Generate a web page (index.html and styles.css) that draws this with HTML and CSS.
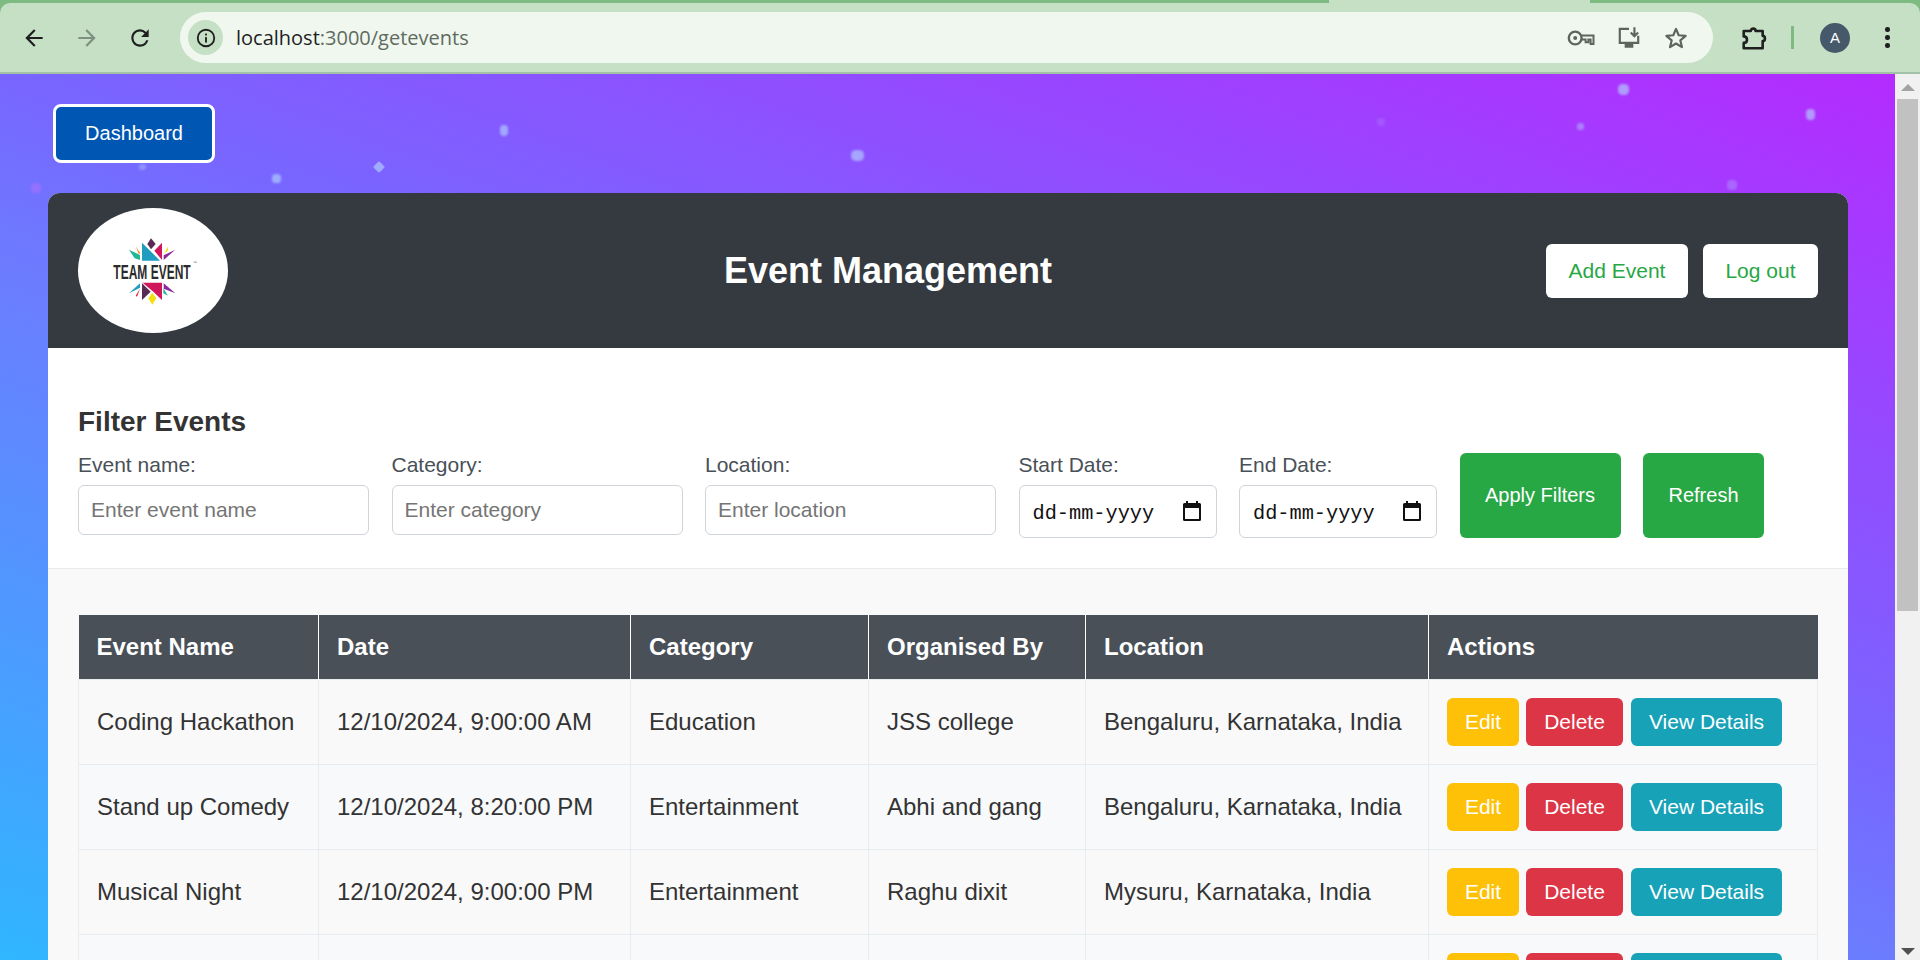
FILE: index.html
```html
<!DOCTYPE html>
<html lang="en">
<head>
<meta charset="utf-8">
<title>Event Management</title>
<link rel="stylesheet" href="styles.css">
</head>
<body>
<div class="browser">
  <div class="tabstrip"><div class="active-tab"></div></div>
  <div class="toolbar">
    <button class="tb-btn"><svg viewBox="0 0 24 24" width="26" height="26"><path fill="#1f1f1f" d="M20 11H7.83l5.59-5.59L12 4l-8 8 8 8 1.41-1.41L7.83 13H20v-2z"/></svg></button>
    <button class="tb-btn"><svg viewBox="0 0 24 24" width="26" height="26"><path fill="#7f8f80" d="M4 11h12.17l-5.59-5.59L12 4l8 8-8 8-1.41-1.41L16.17 13H4v-2z"/></svg></button>
    <button class="tb-btn"><svg viewBox="0 0 24 24" width="26" height="26"><path fill="#1f1f1f" d="M17.65 6.35A7.958 7.958 0 0 0 12 4c-4.42 0-7.99 3.58-7.99 8s3.57 8 7.99 8c3.73 0 6.84-2.55 7.73-6h-2.08A5.99 5.99 0 0 1 12 18c-3.31 0-6-2.69-6-6s2.69-6 6-6c1.66 0 3.14.69 4.22 1.78L13 11h7V4l-2.35 2.35z"/></svg></button>
    <div class="omnibox">
      <span class="chip"><svg viewBox="0 0 24 24" width="22" height="22"><circle cx="12" cy="12" r="9" fill="none" stroke="#1f1f1f" stroke-width="2"/><rect x="11" y="11" width="2" height="6" fill="#1f1f1f"/><rect x="11" y="7.2" width="2" height="2" fill="#1f1f1f"/></svg></span>
      <span class="url"><span class="host">localhost</span>:3000/getevents</span>
      <span class="omni-icons">
        <svg viewBox="0 0 28 18" width="28" height="18"><circle cx="8.2" cy="9" r="6.4" fill="none" stroke="#5e655f" stroke-width="2.4"/><circle cx="8.2" cy="9" r="2" fill="#5e655f"/><path d="M14.5 6.6H26.5V15H23.6V10.4H21.4V13.2H18.6V10.4H14.5" fill="none" stroke="#5e655f" stroke-width="2"/></svg>
        <svg viewBox="0 0 24 24" width="26" height="26"><path d="M12 3.5H3.5v13h17V10" fill="none" stroke="#5e655f" stroke-width="2"/><rect x="8" y="17" width="8" height="4" fill="#5e655f"/><path d="M17 2v8M13.6 7l3.4 3.4L20.4 7" fill="none" stroke="#5e655f" stroke-width="2"/></svg>
        <svg viewBox="0 0 24 24" width="26" height="26"><path d="M12 3.6l2.5 5.9 6.4.5-4.9 4.2 1.5 6.2-5.5-3.3-5.5 3.3 1.5-6.2L3.1 10l6.4-.5z" fill="none" stroke="#5e655f" stroke-width="2" stroke-linejoin="round"/></svg>
      </span>
    </div>
    <span class="ext"><svg viewBox="0 0 24 24" width="26" height="26"><path fill="none" stroke="#1f1f1f" stroke-width="2.4" stroke-linejoin="round" d="M2.5 5.5H9C9 2.6 13.5 2.6 13.5 5.5H20V10C22.8 10 22.8 14.8 20 14.8V21.5H2.5V16.5C6.5 16.5 6.5 10.5 2.5 10.5Z"/></svg></span>
    <span class="sep"></span>
    <span class="avatar">A</span>
    <span class="kebab"><i></i><i></i><i></i></span>
  </div>
</div>

<div class="window">
  <main class="viewport">
    <span class="spark s1"></span><span class="spark s2"></span><span class="spark s3"></span><span class="spark s4"></span>
    <span class="spark s5"></span><span class="spark s6"></span><span class="spark s7"></span><span class="spark s8"></span>
    <span class="spark s9"></span><span class="spark s10"></span><span class="spark s11"></span>

    <button class="dash-btn">Dashboard</button>

    <section class="card">
      <header class="card-head">
        <div class="logo">
          <svg viewBox="114 54 450 375" width="150" height="125">
            <polygon fill="#5a2a55" points="333,145 347,162 333,178 322,162"/>
            <polygon fill="#1f9cc0" points="306,158 360,212 306,212"/>
            <polygon fill="#d1175c" points="366,158 366,210 343,182"/>
            <polygon fill="#1fb894" points="267,179 300,195 300,210 284,205"/>
            <polygon fill="#f08a24" points="288,170 301,190 296,192"/>
            <polygon fill="#f2e011" points="383,170 385,180 372,193"/>
            <polygon fill="#8a2aa0" points="406,179 371,196 371,210"/>
            <text class="logo-text" transform="translate(220 268) scale(1 1.25)" textLength="232" lengthAdjust="spacingAndGlyphs">TEAM EVENT</text>
            <text class="logo-tm" x="458" y="222">™</text>
            <polygon fill="#1f9cc0" points="300,280 300,293 267,310"/>
            <polygon fill="#e0203a" points="300,296 291,320 287,317"/>
            <polygon fill="#5a2a55" points="306,280 332,305 306,330"/>
            <polygon fill="#d1175c" points="308,278 366,278 366,330 340,305"/>
            <polygon fill="#f2e011" points="337,308 349,325 337,344 325,325"/>
            <polygon fill="#1fb894" points="370,295 384,317 370,310"/>
            <polygon fill="#8a2aa0" points="371,280 406,310 371,296"/>
          </svg>
        </div>
        <h1 class="title">Event Management</h1>
        <div class="head-actions">
          <button class="head-btn">Add Event</button>
          <button class="head-btn">Log out</button>
        </div>
      </header>

      <section class="filters">
        <h3 class="filters-title">Filter Events</h3>
        <div class="filter-row">
          <div class="field"><label>Event name:</label><input class="text-input" type="text" placeholder="Enter event name"></div>
          <div class="field"><label>Category:</label><input class="text-input" type="text" placeholder="Enter category"></div>
          <div class="field"><label>Location:</label><input class="text-input" type="text" placeholder="Enter location"></div>
          <div class="field"><label>Start Date:</label><div class="date-input"><span>dd-mm-yyyy</span><svg viewBox="0 0 18 20" width="18" height="20"><path d="M3 0h2v2h8V0h2v2h1.5A1.5 1.5 0 0 1 18 3.5v15a1.5 1.5 0 0 1-1.5 1.5h-15A1.5 1.5 0 0 1 0 18.500v-15A1.5 1.5 0 0 1 1.500 2H3zM2 7v11h14V7z" fill="#111"/></svg></div></div>
          <div class="field"><label>End Date:</label><div class="date-input"><span>dd-mm-yyyy</span><svg viewBox="0 0 18 20" width="18" height="20"><path d="M3 0h2v2h8V0h2v2h1.5A1.5 1.5 0 0 1 18 3.5v15a1.5 1.5 0 0 1-1.5 1.5h-15A1.5 1.5 0 0 1 0 18.500v-15A1.5 1.5 0 0 1 1.500 2H3zM2 7v11h14V7z" fill="#111"/></svg></div></div>
          <button class="green-btn apply">Apply Filters</button>
          <button class="green-btn refresh">Refresh</button>
        </div>
      </section>

      <section class="table-wrap">
        <table class="events">
          <colgroup><col class="c1"><col class="c2"><col class="c3"><col class="c4"><col class="c5"><col class="c6"></colgroup>
          <thead><tr><th>Event Name</th><th>Date</th><th>Category</th><th>Organised By</th><th>Location</th><th>Actions</th></tr></thead>
          <tbody>
            <tr><td>Coding Hackathon</td><td>12/10/2024, 9:00:00 AM</td><td>Education</td><td>JSS college</td><td>Bengaluru, Karnataka, India</td><td class="actions"><button class="act edit">Edit</button><button class="act del">Delete</button><button class="act view">View Details</button></td></tr>
            <tr><td>Stand up Comedy</td><td>12/10/2024, 8:20:00 PM</td><td>Entertainment</td><td>Abhi and gang</td><td>Bengaluru, Karnataka, India</td><td class="actions"><button class="act edit">Edit</button><button class="act del">Delete</button><button class="act view">View Details</button></td></tr>
            <tr><td>Musical Night</td><td>12/10/2024, 9:00:00 PM</td><td>Entertainment</td><td>Raghu dixit</td><td>Mysuru, Karnataka, India</td><td class="actions"><button class="act edit">Edit</button><button class="act del">Delete</button><button class="act view">View Details</button></td></tr>
            <tr><td></td><td></td><td></td><td></td><td></td><td class="actions"><button class="act edit">Edit</button><button class="act del">Delete</button><button class="act view">View Details</button></td></tr>
          </tbody>
        </table>
      </section>
    </section>
  </main>
  <aside class="scrollbar">
    <span class="arrow up"></span>
    <span class="thumb"></span>
    <span class="track"></span>
    <span class="arrow down"></span>
  </aside>
</div>
</body>
</html>
```

FILE: styles.css
```css
* { box-sizing: border-box; }
html, body { margin: 0; height: 960px; overflow: hidden; }
body { font-family: "Liberation Sans", Arial, sans-serif; display: flex; flex-direction: column; }
button { font-family: inherit; cursor: pointer; }

/* Browser chrome */
.browser { height: 74px; flex: none; background: #7dbb82; position: relative; border-bottom: 2px solid #a3c1a6; }
.tabstrip { height: 3px; position: relative; }
.active-tab { position: absolute; left: 1329px; width: 261px; top: 0; height: 3px; background: #c5e0c5; }
.toolbar { height: 69px; background: #c5e0c5; border-radius: 10px 10px 0 0; display: flex; align-items: center; padding-left: 14px; }
.tb-btn { width: 54px; height: 40px; padding: 0; border: 0; background: none; display: flex; align-items: center; justify-content: center; margin-left: -1px; }
.tb-btn:first-child { width: 40px; margin-right: 7px; margin-left: 0; }
.tb-btn:nth-child(3) { margin-right: 13px; }
.omnibox { width: 1533px; height: 51px; border-radius: 26px; background: #eff7ef; display: flex; align-items: center; padding-left: 8px; }
.chip { width: 35px; height: 35px; border-radius: 50%; background: #c5e0c5; display: flex; align-items: center; justify-content: center; flex: none; }
.url { font-family: "Open Sans", sans-serif; font-size: 20px; color: #5f6b60; margin-left: 13px; }
.host { color: #1f1f1f; }
.omni-icons { margin-left: auto; display: flex; align-items: center; gap: 21px; padding-right: 24px; }
.ext { margin-left: 28px; display: flex; }
.sep { width: 3px; height: 23px; background: #7dbb82; margin-left: 24px; }
.avatar { width: 30px; height: 30px; border-radius: 50%; background: #45596a; color: #fff; font-size: 15px; display: flex; align-items: center; justify-content: center; margin-left: 26px; }
.kebab { display: flex; flex-direction: column; gap: 3.500px; margin-left: 35px; }
.kebab i { width: 4.500px; height: 4.500px; border-radius: 50%; background: #1f1f1f; display: block; }

/* Window */
.window { flex: 1; display: flex; min-height: 0; }
.viewport { flex: 1; position: relative; overflow: hidden; padding: 30px 0 0 48px; background: linear-gradient(20deg, #30b6ff 0%, #6c7cff 44%, #7866ff 56%, #b42bff 100%); }

.spark { position: absolute; border-radius: 40%; filter: blur(1px); background: rgba(180, 210, 255, .65); }
.s1 { left: 500px; top: 51px; width: 8px; height: 11px; }
.s2 { left: 373px; top: 87px; width: 12px; height: 12px; border-radius: 0; clip-path: polygon(50% 0, 100% 50%, 50% 100%, 0 50%); }
.s3 { left: 272px; top: 100px; width: 9px; height: 9px; }
.s4 { left: 139px; top: 90px; width: 7px; height: 6px; opacity: .6; }
.s5 { left: 31px; top: 109px; width: 10px; height: 10px; opacity: .35; background: #d070ff; }
.s6 { left: 1618px; top: 10px; width: 11px; height: 11px; }
.s7 { left: 1806px; top: 35px; width: 9px; height: 11px; }
.s8 { left: 1577px; top: 49px; width: 7px; height: 7px; opacity: .7; }
.s9 { left: 1377px; top: 44px; width: 8px; height: 8px; opacity: .25; }
.s10 { left: 1727px; top: 106px; width: 10px; height: 10px; opacity: .45; }
.s11 { left: 851px; top: 76px; width: 13px; height: 11px; }

.dash-btn { display: block; margin-left: 5px; width: 162px; height: 59px; background: #0056b3; color: #fff; border: 3px solid #fff; border-radius: 8px; font-size: 20px; padding: 0; }

.card { position: relative; width: 1800px; margin-top: 30px; background: #f9f9f9; border-radius: 12px 12px 0 0; }
.card-head { height: 155px; background: #343a40; border-radius: 12px 12px 0 0; display: flex; align-items: center; justify-content: space-between; padding: 0 30px; }
.logo { width: 150px; height: 125px; border-radius: 50%; background: #fff; display: flex; }
.logo-text { font-family: "Liberation Sans Narrow", "Liberation Sans", sans-serif; font-weight: 700; font-size: 48px; fill: #2b2b2b; }
.logo-tm { font-family: "Liberation Sans", sans-serif; font-size: 12px; fill: #555; }
.title { margin: 0 0 0 2px; color: #fff; font-size: 36px; font-weight: 700; }
.head-actions { display: flex; gap: 15px; }
.head-btn { height: 54px; padding: 0 22.500px; background: #fff; color: #28a745; border: 0; border-radius: 6px; font-size: 21px; }

.filters { background: #fff; border-bottom: 1px solid #e9ecef; height: 221px; padding: 58px 30px 0; }
.filters-title { margin: 0 0 15px; font-size: 28px; line-height: 32px; color: #333; }
.filter-row { display: flex; align-items: stretch; gap: 22.500px; height: 85px; }
.field { display: flex; flex-direction: column; }
.field label { font-size: 21px; line-height: 24px; height: 32px; color: #495057; }
.text-input { width: 291px; height: 50px; border: 1px solid #ced4da; border-radius: 6px; padding: 0 12px; font-size: 21px; font-family: inherit; background: #fff; }
.text-input::placeholder { color: #757575; }
.date-input { width: 198px; height: 53px; border: 1px solid #ced4da; border-radius: 6px; padding: 3px 15px 0 13px; font-size: 20.300px; font-family: "Liberation Mono", "DejaVu Sans Mono", monospace; background: #fff; color: #111; display: flex; align-items: center; justify-content: space-between; }
.date-input svg { margin-top: -5px; }
.green-btn { height: 85px; border: 0; border-radius: 6px; background: #28a745; color: #fff; font-size: 20px; padding: 0; }
.apply { width: 161px; }
.refresh { width: 121px; }

.table-wrap { padding: 46px 30px 0; }
.events { border-collapse: collapse; table-layout: fixed; width: 1739px; }
.c1 { width: 240px; } .c2 { width: 312px; } .c3 { width: 238px; } .c4 { width: 217px; } .c5 { width: 343px; } .c6 { width: 389px; }
.events th { background: #495057; color: #fff; font-size: 24px; text-align: left; height: 64px; padding: 0 18px; border-left: 1px solid #fff; border-right: 1px solid #fff; }
.events th:first-child { border-left: 0; }
.events th:last-child { border-right: 0; }
.events td { height: 85px; padding: 0 18px; font-size: 24px; color: #333; border: 1px solid #e9ecef; background: #f9f9f9; }
.events tr:nth-child(even) td { background: #f8f9fb; }
.events .actions { white-space: nowrap; }
.act { height: 48px; border: 0; border-radius: 6px; color: #fff; font-size: 21px; padding: 0; margin-right: 7px; vertical-align: middle; }
.edit { width: 72px; background: #ffc107; }
.del { width: 97px; background: #dc3545; margin-right: 8px; }
.view { width: 151px; background: #17a2b8; margin-right: 0; }

/* Scrollbar */
.scrollbar { width: 25px; flex: none; background: #f1f1f1; display: flex; flex-direction: column; align-items: center; }
.arrow { width: 0; height: 0; border-left: 7px solid transparent; border-right: 7px solid transparent; flex: none; }
.arrow.up { border-bottom: 7px solid #a3a3a3; margin: 10px 0 8px; }
.thumb { width: 21px; height: 512px; background: #c1c1c1; flex: none; }
.track { flex: 1; }
.arrow.down { border-top: 7px solid #505050; margin-bottom: 5px; }
```
